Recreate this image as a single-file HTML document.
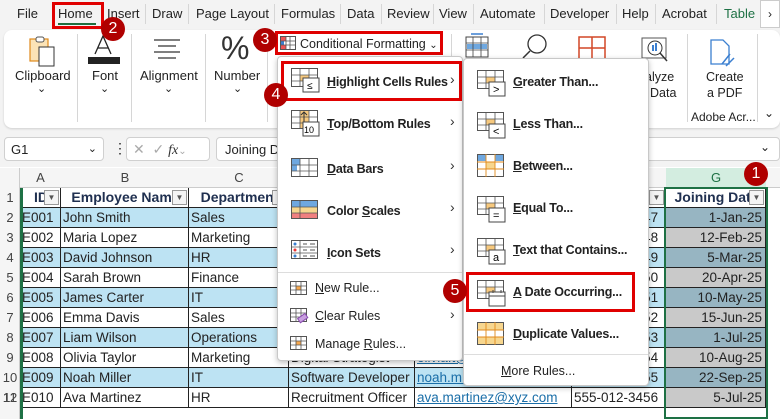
<!DOCTYPE html><html><head><meta charset="utf-8"><style>
*{box-sizing:border-box;margin:0;padding:0}
body{width:780px;height:419px;overflow:hidden;background:#f3f3f3;font-family:"Liberation Sans",Arial,sans-serif;position:relative;font-size:13px;color:#222}
.a{position:absolute}
.tab{position:absolute;top:6px;font-size:13px;color:#222}
.sep{position:absolute;top:4px;width:1px;height:20px;background:#d6d6d6}
.badge{position:absolute;width:24px;height:24px;border-radius:50%;background:#b00000;color:#fff;font-size:16px;text-align:center;line-height:24px;font-weight:normal}
.red{position:absolute;border:3px solid #e00000}
.cell{position:absolute;height:20px;line-height:19px;font-size:13.5px;white-space:nowrap;overflow:hidden;padding-left:2px;border-right:1px solid #222;border-bottom:1px solid #222}
.menu{position:absolute;background:#fff;border:1px solid #c8c8c8;border-radius:4px;box-shadow:0 2px 6px rgba(0,0,0,.25)}
.mi{position:absolute;font-weight:bold;font-size:12.5px;color:#222;letter-spacing:-0.2px}
.mi2{position:absolute;font-size:12.5px;color:#222}
.arr{position:absolute;font-size:14px;color:#333}
u{text-decoration:underline}
</style></head><body>
<div class="tab" style="left:17px">File</div>
<div class="tab" style="left:58px">Home</div>
<div class="a" style="left:58px;top:23px;width:38px;height:2px;background:#1e6e3e"></div>
<div class="tab" style="left:107px">Insert</div><div class="sep" style="left:145px"></div>
<div class="tab" style="left:152px">Draw</div><div class="sep" style="left:188px"></div>
<div class="tab" style="left:196px">Page Layout</div><div class="sep" style="left:274px"></div>
<div class="tab" style="left:281px">Formulas</div><div class="sep" style="left:340px"></div>
<div class="tab" style="left:347px">Data</div><div class="sep" style="left:381px"></div>
<div class="tab" style="left:387px">Review</div><div class="sep" style="left:433px"></div>
<div class="tab" style="left:439px">View</div><div class="sep" style="left:473px"></div>
<div class="tab" style="left:480px">Automate</div><div class="sep" style="left:544px"></div>
<div class="tab" style="left:550px">Developer</div><div class="sep" style="left:616px"></div>
<div class="tab" style="left:622px">Help</div><div class="sep" style="left:655px"></div>
<div class="tab" style="left:662px">Acrobat</div><div class="sep" style="left:716px"></div>
<div class="tab" style="left:724px;color:#1e7145">Table</div>
<div class="a" style="left:760px;top:0;width:20px;height:28px;background:#fff;border:1px solid #ccc;font-size:12px;text-align:center;line-height:26px">›</div>
<div class="red" style="left:52px;top:2px;width:52px;height:27px"></div>
<div class="a" style="left:4px;top:30px;width:776px;height:98px;background:#fff;border-radius:8px;box-shadow:0 1px 2px rgba(0,0,0,.15)"></div>
<svg class="a" style="left:28px;top:34px" width="32" height="34"><rect x="2" y="5" width="18" height="22" fill="#fbe3b6" stroke="#e08a1c" stroke-width="1.2"/><rect x="11" y="13" width="15" height="19" fill="#fff" stroke="#333"/><rect x="8" y="3" width="8" height="5" rx="2" fill="#fff" stroke="#555"/></svg>
<div class="a" style="left:15px;top:68px;font-size:13px">Clipboard</div><div class="a" style="left:37px;top:82px;font-size:11px">⌄</div>
<div class="sep" style="left:77px;top:34px;height:88px"></div>
<svg class="a" style="left:86px;top:34px" width="36" height="32"><path d="M9 20 L17 2 L25 20 M12 14 H22" stroke="#222" stroke-width="1.3" fill="none"/><rect x="2" y="23" width="32" height="7" fill="#222"/></svg>
<div class="a" style="left:92px;top:68px">Font</div><div class="a" style="left:100px;top:82px;font-size:11px">⌄</div>
<div class="sep" style="left:131px;top:34px;height:88px"></div>
<svg class="a" style="left:152px;top:38px" width="30" height="24"><path d="M2 2H28M6 8H24M2 14H28M6 20H24" stroke="#333" stroke-width="1.2"/></svg>
<div class="a" style="left:140px;top:68px">Alignment</div><div class="a" style="left:164px;top:82px;font-size:11px">⌄</div>
<div class="sep" style="left:205px;top:34px;height:88px"></div>
<div class="a" style="left:221px;top:30px;font-size:32px;color:#333">%</div>
<div class="a" style="left:214px;top:68px">Number</div><div class="a" style="left:233px;top:82px;font-size:11px">⌄</div>
<div class="sep" style="left:267px;top:34px;height:88px"></div>
<svg class="a" style="left:280px;top:36px" width="16" height="14"><rect x=".5" y=".5" width="15" height="13" fill="#fff" stroke="#555"/><rect x="1" y="1" width="5" height="4" fill="#e55"/><rect x="1" y="9" width="5" height="4" fill="#e55"/><rect x="1" y="5" width="3" height="4" fill="#3b7fd0"/><path d="M6 0V14M10 0V14M0 5H16M0 9H16" stroke="#555" stroke-width=".8"/></svg>
<div class="a" style="left:300px;top:37px;font-size:12.5px">Conditional Formatting <span style="font-size:10px">⌄</span></div>
<div class="red" style="left:275px;top:31px;width:168px;height:24px"></div>
<div class="sep" style="left:451px;top:34px;height:88px"></div>
<svg class="a" style="left:465px;top:33px" width="26" height="26"><rect x="1" y="4" width="22" height="20" fill="#fff" stroke="#444"/><rect x="2" y="11" width="20" height="5" fill="#6fa8e0"/><path d="M1 10H23M1 17H23M8 4V24M16 4V24" stroke="#444" stroke-width=".8"/><path d="M6 1H18" stroke="#3b7fd0" stroke-width="1.5"/></svg>
<svg class="a" style="left:520px;top:32px" width="30" height="26"><circle cx="17" cy="12" r="9" fill="none" stroke="#333" stroke-width="1.3"/><path d="M10 19L3 26" stroke="#333" stroke-width="1.5"/></svg>
<svg class="a" style="left:578px;top:36px" width="28" height="24"><rect x="1" y="1" width="26" height="22" fill="none" stroke="#d24726" stroke-width="1.5"/><path d="M14 1V23M1 12H27" stroke="#d24726" stroke-width="1.5"/></svg>
<div class="a" style="left:645px;top:70px;font-size:12.5px">alyze</div><div class="a" style="left:650px;top:86px;font-size:12.5px">Data</div>
<svg class="a" style="left:640px;top:36px" width="32" height="30"><rect x="2" y="2" width="24" height="20" fill="none" stroke="#555"/><circle cx="15" cy="12" r="7" fill="#fff" stroke="#333"/><rect x="12" y="9" width="2" height="6" fill="#3b7fd0"/><rect x="15" y="7" width="2" height="8" fill="#3b7fd0"/><path d="M20 17L27 25" stroke="#333" stroke-width="1.5"/></svg>
<div class="sep" style="left:687px;top:34px;height:88px"></div>
<svg class="a" style="left:708px;top:38px" width="30" height="32"><path d="M3 2H15L21 8V26H3Z" fill="#fff" stroke="#3b7fd0" stroke-width="1.3"/><path d="M14 26L22 16M18 28L26 20" stroke="#3b7fd0" stroke-width="1.5"/></svg>
<div class="a" style="left:706px;top:70px;font-size:12.5px">Create</div><div class="a" style="left:707px;top:86px;font-size:12.5px">a PDF</div>
<div class="a" style="left:691px;top:110px;font-size:12px">Adobe Acr...</div>
<div class="sep" style="left:757px;top:34px;height:88px"></div>
<div class="a" style="left:764px;top:106px;font-size:12px">⌄</div>
<div class="a" style="left:4px;top:137px;width:100px;height:24px;background:#fff;border:1px solid #d0d0d0;border-radius:4px;padding:4px 6px;font-size:13px">G1<span style="float:right;font-size:11px">⌄</span></div>
<div class="a" style="left:113px;top:140px;font-size:14px">⋮</div>
<div class="a" style="left:126px;top:137px;width:84px;height:24px;background:#fff;border:1px solid #d0d0d0;border-radius:4px;padding:3px 6px;font-size:14px;color:#aaa">✕ &nbsp;✓ <i style="color:#333;font-family:'Liberation Serif',serif">fx</i><span style="font-size:10px">⌄</span></div>
<div class="a" style="left:216px;top:137px;width:564px;height:24px;background:#fff;border:1px solid #d0d0d0;border-radius:4px;padding:4px 8px;font-size:13px">Joining Date</div>
<div class="a" style="left:760px;top:140px;font-size:12px">⌄</div>
<div class="a" style="left:0;top:167px;width:780px;height:252px;background:#fff"></div>
<div class="a" style="left:0;top:168px;width:780px;height:20px;background:#f5f5f5;border-bottom:1px solid #ccc"></div>
<div class="a" style="left:0;top:168px;width:20px;height:251px;background:#f5f5f5;border-right:1px solid #ccc"></div>
<div class="a" style="left:666px;top:168px;width:100px;height:20px;background:#d3ede0;color:#1e7145;text-align:center;line-height:20px">G</div>
<div class="a" style="left:20px;top:168px;width:41px;text-align:center;line-height:20px;color:#444">A</div>
<div class="a" style="left:61px;top:168px;width:128px;text-align:center;line-height:20px;color:#444">B</div>
<div class="a" style="left:189px;top:168px;width:100px;text-align:center;line-height:20px;color:#444">C</div>
<div class="a" style="left:415px;top:168px;width:157px;text-align:center;line-height:20px;color:#444">E</div>
<div id="g"></div>
<div class="a" style="left:20px;top:188px;width:3px;height:231px;background:#1e7145"></div>
<div class="a" style="left:664px;top:187px;width:104px;height:232px;border:2px solid #1e7145"></div>
<script>
var rows=[["ID","Employee Name","Department","Job Title","Email","Phone","Joining Date"],
["E001","John Smith","Sales","Sales Executive","john.s@xyz.com","555-012-3447","1-Jan-25"],
["E002","Maria Lopez","Marketing","Marketing Lead","maria.l@xyz.com","555-012-3448","12-Feb-25"],
["E003","David Johnson","HR","HR Manager","david.j@xyz.com","555-012-3449","5-Mar-25"],
["E004","Sarah Brown","Finance","Accountant","sarah.b@xyz.com","555-012-3450","20-Apr-25"],
["E005","James Carter","IT","IT Support","james.c@xyz.com","555-012-3451","10-May-25"],
["E006","Emma Davis","Sales","Sales Associate","emma.d@xyz.com","555-012-3452","15-Jun-25"],
["E007","Liam Wilson","Operations","Ops Manager","liam.w@xyz.com","555-012-3453","1-Jul-25"],
["E008","Olivia Taylor","Marketing","Digital Strategist","olivia.t@xyz.com","555-012-3454","10-Aug-25"],
["E009","Noah Miller","IT","Software Developer","noah.m@xyz.com","555-012-3455","22-Sep-25"],
["E010","Ava Martinez","HR","Recruitment Officer","ava.martinez@xyz.com","555-012-3456","5-Jul-25"]];
var xs=[20,61,189,289,415,572,666,766],h="";
for(var r=0;r<rows.length;r++){var y=188+r*20;
h+='<div class="a" style="left:0;top:'+y+'px;width:20px;text-align:center;line-height:20px;color:#444">'+(r+1)+'</div>';
for(var c=0;c<7;c++){var bg=r==0?"#fff":(r%2?"#bde3f3":"#fff");
if(c==6&&r>0)bg=r%2?"#97b5c2":"#c9c9c9";
var st="left:"+xs[c]+"px;top:"+y+"px;width:"+(xs[c+1]-xs[c])+"px;background:"+bg+";";
if(r==0)st+="font-weight:bold;color:#203050;font-size:14px;text-align:center;";
if(c==6&&r>0)st+="text-align:right;padding-right:3px;";
if(c==4&&r>0)st+="color:#1a6ea8;text-decoration:underline;";
h+='<div class="cell" style="'+st+'">'+rows[r][c]+'</div>';
if(r==0)h+='<div class="a" style="left:'+(xs[c+1]-17)+'px;top:'+(y+2)+'px;width:15px;height:15px;background:#f4f4f4;border:1px solid #999;font-size:8px;text-align:center;line-height:14px;color:#555">▼</div>';}}
h+='<div class="a" style="left:0;top:388px;width:20px;text-align:center;line-height:20px;color:#444">12</div>';
document.getElementById("g").innerHTML=h;
</script>
<div class="menu" style="left:277px;top:56px;width:186px;height:305px"></div>
<svg class="a" style="left:291px;top:68px" width="30" height="28"><rect x=".5" y=".5" width="26" height="18" fill="#fff" stroke="#555"/><rect x="9" y="7" width="9" height="6" fill="#f7c97e"/><path d="M0 7H27M0 13H27M9 0V19M18 0V19" stroke="#555" stroke-width=".8"/><rect x="12" y="10" width="16" height="14" fill="#fff" stroke="#444"/><text x="16" y="21" font-size="10" font-family="Liberation Sans">≤</text></svg>
<div class="mi" style="left:327px;top:75px"><u>H</u>ighlight Cells Rules</div><div class="arr" style="left:450px;top:71px">›</div>
<div class="red" style="left:281px;top:61px;width:181px;height:40px"></div>
<svg class="a" style="left:291px;top:110px" width="30" height="28"><rect x=".5" y=".5" width="26" height="18" fill="#fff" stroke="#555"/><rect x="9" y="1" width="9" height="17" fill="#f7c97e"/><path d="M0 7H27M0 13H27M9 0V19M18 0V19" stroke="#555" stroke-width=".8"/><path d="M13 12V2M10 5L13 2L16 5" stroke="#333" fill="none"/><rect x="12" y="12" width="16" height="14" fill="#fff" stroke="#444"/><text x="13" y="23" font-size="9" font-family="Liberation Sans">10</text></svg>
<div class="mi" style="left:327px;top:117px"><u>T</u>op/Bottom Rules</div><div class="arr" style="left:450px;top:113px">›</div>
<svg class="a" style="left:291px;top:158px" width="30" height="22"><rect x=".5" y=".5" width="26" height="18" fill="#fff" stroke="#555"/><rect x="1" y="1" width="8" height="6" fill="#6fa8e0"/><rect x="1" y="7" width="5" height="6" fill="#6fa8e0"/><path d="M0 7H27M0 13H27M9 0V19M18 0V19" stroke="#555" stroke-width=".8"/></svg>
<div class="mi" style="left:327px;top:162px"><u>D</u>ata Bars</div><div class="arr" style="left:450px;top:157px">›</div>
<svg class="a" style="left:291px;top:200px" width="30" height="22"><rect x=".5" y=".5" width="26" height="18" fill="#fff" stroke="#555"/><rect x="1" y="1" width="25" height="6" fill="#6fa8e0"/><rect x="1" y="7" width="25" height="6" fill="#f7d68e"/><rect x="1" y="13" width="25" height="5" fill="#f08080"/><path d="M0 7H27M0 13H27M9 0V19" stroke="#555" stroke-width=".8"/></svg>
<div class="mi" style="left:327px;top:204px">Color <u>S</u>cales</div><div class="arr" style="left:450px;top:199px">›</div>
<svg class="a" style="left:291px;top:240px" width="30" height="22"><rect x=".5" y=".5" width="26" height="18" fill="#fff" stroke="#555"/><path d="M0 7H27M0 13H27M9 0V19" stroke="#555" stroke-width=".8"/><circle cx="4" cy="4" r="1.5" fill="#3b7fd0"/><circle cx="4" cy="10" r="1.5" fill="#e33"/><circle cx="4" cy="16" r="1.5" fill="#3b7fd0"/><path d="M12 4H16M19 4H24M12 10H16M19 10H24M12 16H16M19 16H24" stroke="#555"/></svg>
<div class="mi" style="left:327px;top:246px"><u>I</u>con Sets</div><div class="arr" style="left:450px;top:241px">›</div>
<div class="a" style="left:278px;top:272px;width:184px;height:1px;background:#ddd"></div>
<svg class="a" style="left:290px;top:281px" width="18" height="15"><rect x=".5" y=".5" width="16" height="13" fill="#fff" stroke="#555"/><rect x="6" y="5" width="5" height="4" fill="#f7a84e"/><path d="M0 5H17M0 9H17M6 0V14M11 0V14" stroke="#555" stroke-width=".8"/></svg>
<div class="mi2" style="left:315px;top:281px"><u>N</u>ew Rule...</div>
<svg class="a" style="left:290px;top:308px" width="20" height="17"><rect x=".5" y=".5" width="16" height="13" fill="#fff" stroke="#555"/><path d="M0 5H17M0 9H17M6 0V14M11 0V14" stroke="#555" stroke-width=".8"/><rect x="8" y="8" width="9" height="5" fill="#c9a0e0" stroke="#8a4fb0" transform="rotate(-35 12 10)"/></svg>
<div class="mi2" style="left:315px;top:309px"><u>C</u>lear Rules</div><div class="arr" style="left:450px;top:306px">›</div>
<svg class="a" style="left:290px;top:336px" width="18" height="15"><rect x=".5" y=".5" width="16" height="13" fill="#fff" stroke="#555"/><rect x="6" y="5" width="5" height="4" fill="#f7a84e"/><path d="M0 5H17M0 9H17M6 0V14M11 0V14" stroke="#555" stroke-width=".8"/></svg>
<div class="mi2" style="left:315px;top:337px">Manage <u>R</u>ules...</div>
<div class="menu" style="left:463px;top:58px;width:186px;height:328px"></div>
<script>
var it=[["G","reater Than...",">"],["L","ess Than...","<"],["B","etween...",""],["E","qual To...","="],["T","ext that Contains...","a"],["A"," Date Occurring...","cal"],["D","uplicate Values...","dup"]],s="";
for(var i=0;i<it.length;i++){var y=70+i*42,t=it[i][2],svg;
if(t==""||t=="dup"){svg='<rect x=".5" y=".5" width="26" height="22" fill="#fff" stroke="#555"/>'+(t==""?'<rect x="1" y="1" width="8" height="6" fill="#6fa8e0"/><rect x="18" y="1" width="8" height="6" fill="#6fa8e0"/><rect x="9" y="8" width="9" height="7" fill="#f7d68e"/>':'<rect x="1" y="1" width="25" height="7" fill="#f7d68e"/><rect x="1" y="15" width="25" height="7" fill="#f7d68e"/>')+'<path d="M0 8H27M0 15H27M9 0V23M18 0V23" stroke="#e08a1c" stroke-width=".9"/>';}
else{svg='<rect x=".5" y=".5" width="26" height="18" fill="#fff" stroke="#555"/><rect x="9" y="7" width="9" height="6" fill="#f7c97e"/><path d="M0 7H27M0 13H27M9 0V19M18 0V19" stroke="#555" stroke-width=".8"/><rect x="12" y="12" width="16" height="14" fill="#fff" stroke="#444"/>'+(t=="cal"?'<path d="M12 16H28M16 10V13M24 10V13" stroke="#444"/>':'<text x="16" y="23" font-size="11" font-family="Liberation Sans">'+(t=="<"?"&lt;":t=="="?"=":t)+'</text>');}
s+='<svg class="a" style="left:477px;top:'+y+'px" width="30" height="28">'+svg+'</svg><div class="mi" style="left:513px;top:'+(y+5)+'px"><u>'+it[i][0]+'</u>'+it[i][1]+'</div>';}
document.write(s);
</script>
<div class="red" style="left:466px;top:272px;width:169px;height:40px"></div>
<div class="a" style="left:464px;top:354px;width:184px;height:1px;background:#ddd"></div>
<div class="mi2" style="left:501px;top:364px"><u>M</u>ore Rules...</div>
<div class="badge" style="left:744px;top:162px">1</div>
<div class="badge" style="left:101px;top:17px">2</div>
<div class="badge" style="left:253px;top:28px">3</div>
<div class="badge" style="left:264px;top:83px">4</div>
<div class="badge" style="left:443px;top:279px">5</div>
</body></html>
